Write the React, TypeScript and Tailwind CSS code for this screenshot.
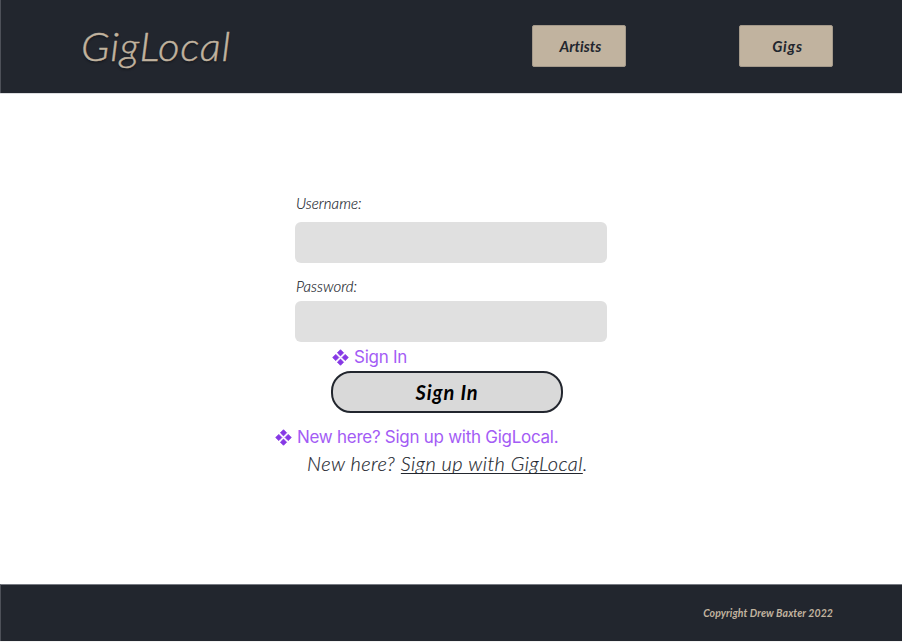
function ComponentIcon() {
  return (
    <svg width="17" height="17" viewBox="0 0 17 17" fill="#8638e5" stroke="#8638e5" strokeWidth="0.8" strokeLinejoin="round" className="shrink-0">
      <path d="M8.5 0.7 11.6 3.8 8.5 6.9 5.4 3.8zM8.5 10.1 11.6 13.2 8.5 16.3 5.4 13.2zM3.8 5.4 6.9 8.5 3.8 11.6 0.7 8.5zM13.2 5.4 16.3 8.5 13.2 11.6 10.1 8.5z" />
    </svg>
  );
}

function ComponentLabel({ text, className }: { text: string; className: string }) {
  return (
    <div className={`flex h-5 items-center gap-[5px] whitespace-nowrap font-['Inter',sans-serif] text-[17px] leading-5 tracking-[-0.27px] text-[#a35cf5] not-italic ${className}`}>
      <ComponentIcon />
      <span>{text}</span>
    </div>
  );
}

function Field({ label, type, className }: { label: string; type: string; className: string }) {
  return (
    <label className={`block w-[312px] text-[15px] leading-5 font-light tracking-[0.05px] ${className}`}>
      <span className="block h-5 pl-px [-webkit-text-stroke:0.15px_#22262e]">{label}</span>
      <input type={type} className={`block h-[41px] w-full rounded-md bg-[#e0e0e0] ${type === "text" ? "mt-[9px]" : "mt-[5px]"}`} />
    </label>
  );
}

export default function App() {
  return (
    <div className="flex h-[642px] w-[902px] flex-col bg-white font-['Lato',sans-serif] text-[#22262e] italic [font-variant-ligatures:none]">
      <header className="flex h-[93px] items-center border-l border-[#4d5058] bg-[#22262e] pr-[69px] pl-[80px]">
        <h1 className="mr-auto origin-left scale-x-[1.05] pb-px text-[40px] leading-[46px] font-light tracking-[0.7px] text-[#c1b39f] [-webkit-text-stroke:0.4px_#c1b39f] [text-shadow:0_2px_2px_rgba(0,0,0,0.35)]">GigLocal</h1>
        <nav className="flex gap-[113px] pb-px text-[15px] font-bold">
          <a className="flex h-[42px] w-[94px] items-center justify-center rounded-xs border border-[#a4998a] bg-[#c1b39f] pl-[3px]">Artists</a>
          <a className="flex h-[42px] w-[94px] items-center justify-center rounded-xs border border-[#a4998a] bg-[#c1b39f] pl-[3px] tracking-[0.8px]">Gigs</a>
        </nav>
      </header>
      <main className="flex flex-1 flex-col items-start border-t border-[#dcdde0] pt-[99px] pl-[295px]">
        <Field label="Username:" type="text" className="" />
        <Field label="Password:" type="password" className="mt-[13px]" />
        <ComponentLabel text="Sign In" className="mt-[5px] ml-[37px]" />
        <button className="mt-[4px] ml-9 h-[42px] w-[232px] rounded-[20px] border-2 border-[#22262e] bg-[#d9d9d9] text-[20px] leading-5 font-bold tracking-[0.9px] text-black italic">Sign In</button>
        <ComponentLabel text="New here? Sign up with GigLocal." className="mt-[14px] -ml-5" />
        <p className="mt-[4px] ml-3 text-[20px] leading-6 font-light tracking-[0.42px] whitespace-nowrap [-webkit-text-stroke:0.15px_#22262e]">
          New here? <a className="underline decoration-1 underline-offset-[2px] [text-decoration-skip-ink:none]">Sign up with GigLocal</a>.
        </p>
      </main>
      <footer className="flex h-[57px] items-center justify-end border-t border-l border-t-[#777a82] border-l-[#4d5058] bg-[#22262e] pt-px pr-[69px] text-[10.5px] font-bold tracking-[0.08px] text-[#c1b39f]">
        Copyright Drew Baxter 2022
      </footer>
      <div className="h-px bg-[#f4f4f4]" />
    </div>
  );
}
